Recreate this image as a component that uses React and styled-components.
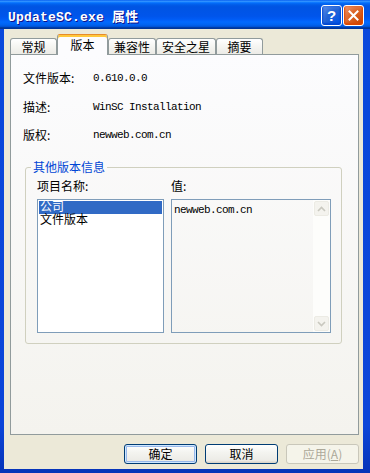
import React from "react";
import styled, { createGlobalStyle } from "styled-components";

const Global = createGlobalStyle`
  html, body { margin: 0; padding: 0; background: #ffffff; }
  #root { width: 370px; height: 473px; }
`;

const ui = `"Noto Sans CJK SC", "Liberation Sans", sans-serif`;
const compact = `"Liberation Sans", "Noto Sans CJK SC", sans-serif`;
const mono = `"Liberation Mono", "Noto Sans CJK SC", monospace`;

const Window = styled.div`
  width: 370px;
  height: 473px;
  box-sizing: border-box;
  display: flex;
  flex-direction: column;
  background: linear-gradient(180deg, #0a49dc 0%, #0b45d8 90%, #0633b8 100%);
  font-family: ${ui};
  font-size: 12px;
  color: #000;
`;

const TitleBar = styled.div`
  height: 29px;
  flex: none;
  box-sizing: border-box;
  display: flex;
  align-items: center;
  padding: 2px 6px 0 8px;
  background: linear-gradient(
    180deg,
    #0058ee 0%,
    #3593ff 4%,
    #288eff 6%,
    #127dff 8%,
    #036ffc 10%,
    #0262ee 14%,
    #0057e5 20%,
    #0054e3 24%,
    #0055eb 56%,
    #005bf5 66%,
    #026afe 76%,
    #0062ef 86%,
    #0052d6 92%,
    #0040ab 94%,
    #003092 100%
  );
`;

const Title = styled.div`
  flex: 1;
  color: #fff;
  font-family: ${mono};
  font-weight: bold;
  font-size: 13px;
  letter-spacing: 0.2px;
  text-shadow: 1px 1px #0f1089;
  white-space: pre;
`;

const CaptionButton = styled.div`
  width: 21px;
  height: 21px;
  box-sizing: border-box;
  border: 1px solid #fff;
  border-radius: 3px;
  margin-left: 1px;
  display: flex;
  align-items: center;
  justify-content: center;
  color: #fff;
  font-family: "Liberation Sans", sans-serif;
  font-weight: bold;
  font-size: 15px;
  background: ${(p) =>
    p.$close
      ? "radial-gradient(circle at 90% 90%, #cc4600 0%, #dc6527 55%, #f19f7c 100%)"
      : "radial-gradient(circle at 90% 90%, #0054e9 0%, #2263d5 55%, #6696eb 100%)"};
  box-shadow: inset 0 -1px 2px 1px ${(p) => (p.$close ? "#da4600" : "#0047d2")};
`;

const Frame = styled.div`
  flex: 1;
  display: flex;
  padding: 0 7px 4px 4px;
  min-height: 0;
`;

const Body = styled.div`
  flex: 1;
  background: #ece9d8;
  display: flex;
  flex-direction: column;
  padding: 5px 4px 0 6px;
`;

const TabStrip = styled.div`
  height: 20px;
  flex: none;
  display: flex;
  align-items: flex-end;
`;

const Tab = styled.div`
  position: relative;
  box-sizing: border-box;
  min-width: ${(p) => (p.$active ? "51px" : "47px")};
  height: ${(p) => (p.$active ? "21px" : "16px")};
  margin-bottom: ${(p) => (p.$active ? "-1px" : "0")};
  padding: ${(p) => (p.$active ? "3px 5px 0" : "1px 5px 0")};
  line-height: 14px;
  text-align: center;
  border: 1px solid #919b9c;
  border-bottom: none;
  border-top-color: ${(p) => (p.$active ? "#e68b2c" : "#919b9c")};
  border-radius: 3px 3px 0 0;
  background: ${(p) =>
    p.$active ? "#fcfcfe" : "linear-gradient(180deg, #ffffff 0%, #f3f3ef 60%, #ecebe6 100%)"};
  box-shadow: ${(p) => (p.$active ? "inset 0 2px 0 #ffc83c" : "none")};
  z-index: ${(p) => (p.$active ? 1 : 0)};
  white-space: nowrap;
`;

const Panel = styled.div`
  height: 381px;
  flex: none;
  box-sizing: border-box;
  border: 1px solid #919b9c;
  background: linear-gradient(180deg, #fcfcfe 0%, #f4f3ee 100%);
  display: flex;
  flex-direction: column;
`;

const InfoGrid = styled.div`
  display: grid;
  grid-template-columns: 70px 1fr;
  grid-auto-rows: 14px;
  row-gap: 14.5px;
  margin: 16px 0 0 12px;
  line-height: 14px;
`;

const Label = styled.div`
  white-space: nowrap;
`;

const Value = styled.div`
  font-family: ${mono};
  font-size: 11px;
  letter-spacing: -0.6px;
  white-space: nowrap;
`;

const Group = styled.fieldset`
  margin: 18px 0 0 14px;
  padding: 0;
  width: 317px;
  box-sizing: border-box;
  border: 1px solid #d0d0bf;
  border-radius: 3px;
  min-inline-size: 0;
`;

const GroupTitle = styled.legend`
  margin-left: 5px;
  padding: 0 2px;
  color: #0046d5;
  line-height: 14px;
  font-size: 12px;
`;

const GroupGrid = styled.div`
  display: grid;
  grid-template-columns: 127px 160px;
  grid-template-rows: 14px 134px;
  column-gap: 7px;
  row-gap: 6px;
  padding: 5px 10px 10px 11px;
  line-height: 14px;
`;

const ListBox = styled.div`
  box-sizing: border-box;
  border: 1px solid #7f9db9;
  background: #fff;
  padding: 1px;
`;

const ListItem = styled.div`
  height: 13px;
  line-height: 13px;
  padding-left: 1px;
  font-family: ${compact};
  white-space: nowrap;
  background: ${(p) => (p.$selected ? "#316ac5" : "transparent")};
  color: ${(p) => (p.$selected ? "#fff" : "#000")};
`;

const ValueBox = styled.div`
  box-sizing: border-box;
  border: 1px solid #7f9db9;
  display: flex;
`;

const ValueText = styled.div`
  flex: 1;
  padding: 4px 2px 0 2px;
  font-family: ${mono};
  font-size: 11px;
  letter-spacing: -0.6px;
  line-height: 12px;
  white-space: nowrap;
`;

const ScrollBar = styled.div`
  width: 17px;
  display: flex;
  flex-direction: column;
  justify-content: space-between;
  background: #fdfdfb;
  padding: 1px 0;
`;

const ScrollButton = styled.div`
  width: 15px;
  height: 15px;
  margin: 0 1px;
  box-sizing: border-box;
  border: 1px solid #ecebe4;
  border-radius: 2px;
  background: #f4f3ee;
  display: flex;
  align-items: center;
  justify-content: center;
`;

const ButtonRow = styled.div`
  display: flex;
  justify-content: flex-end;
  gap: 8px;
  margin-top: 9px;
`;

const Button = styled.div`
  width: 73px;
  height: 20px;
  box-sizing: border-box;
  border: 1px solid ${(p) => (p.$disabled ? "#c9c7ba" : "#003c74")};
  border-radius: 3px;
  display: flex;
  align-items: center;
  justify-content: center;
  line-height: 14px;
  color: ${(p) => (p.$disabled ? "#aca899" : "#000")};
  background: ${(p) =>
    p.$disabled
      ? "#f5f4ea"
      : "linear-gradient(180deg, #ffffff 0%, #f4f4f0 40%, #ecebe6 86%, #d6d0c5 100%)"};
  box-shadow: ${(p) =>
    p.$default
      ? "inset 0 0 0 1px #cee7ff, inset 0 0 0 2px #98b8ea"
      : "none"};
`;

const Accel = styled.span`
  text-decoration: underline;
`;

function Chevron({ up }) {
  return (
    <svg width="9" height="6" viewBox="0 0 9 6">
      <path
        d={up ? "M1 5 L4.5 1.5 L8 5" : "M1 1 L4.5 4.5 L8 1"}
        fill="none"
        stroke="#c9c8bf"
        strokeWidth="1.6"
      />
    </svg>
  );
}

export default function App() {
  const tabs = ["常规", "版本", "兼容性", "安全之星", "摘要"];
  return (
    <>
      <Global />
      <Window>
        <TitleBar>
          <Title>UpdateSC.exe 属性</Title>
          <CaptionButton>?</CaptionButton>
          <CaptionButton $close>
            <svg width="11" height="11" viewBox="0 0 11 11">
              <path d="M1.5 1.5 L9.5 9.5 M9.5 1.5 L1.5 9.5" stroke="#fff" strokeWidth="2" strokeLinecap="square" />
            </svg>
          </CaptionButton>
        </TitleBar>
        <Frame>
          <Body>
            <TabStrip>
              {tabs.map((t) => (
                <Tab key={t} $active={t === "版本"}>
                  {t}
                </Tab>
              ))}
            </TabStrip>
            <Panel>
              <InfoGrid>
                <Label>文件版本:</Label>
                <Value>0.610.0.0</Value>
                <Label>描述:</Label>
                <Value>WinSC Installation</Value>
                <Label>版权:</Label>
                <Value>newweb.com.cn</Value>
              </InfoGrid>
              <Group>
                <GroupTitle>其他版本信息</GroupTitle>
                <GroupGrid>
                  <Label>项目名称:</Label>
                  <Label>值:</Label>
                  <ListBox>
                    <ListItem $selected>公司</ListItem>
                    <ListItem>文件版本</ListItem>
                  </ListBox>
                  <ValueBox>
                    <ValueText>newweb.com.cn</ValueText>
                    <ScrollBar>
                      <ScrollButton>
                        <Chevron up />
                      </ScrollButton>
                      <ScrollButton>
                        <Chevron />
                      </ScrollButton>
                    </ScrollBar>
                  </ValueBox>
                </GroupGrid>
              </Group>
            </Panel>
            <ButtonRow>
              <Button $default>确定</Button>
              <Button>取消</Button>
              <Button $disabled>
                应用(<Accel>A</Accel>)
              </Button>
            </ButtonRow>
          </Body>
        </Frame>
      </Window>
    </>
  );
}
